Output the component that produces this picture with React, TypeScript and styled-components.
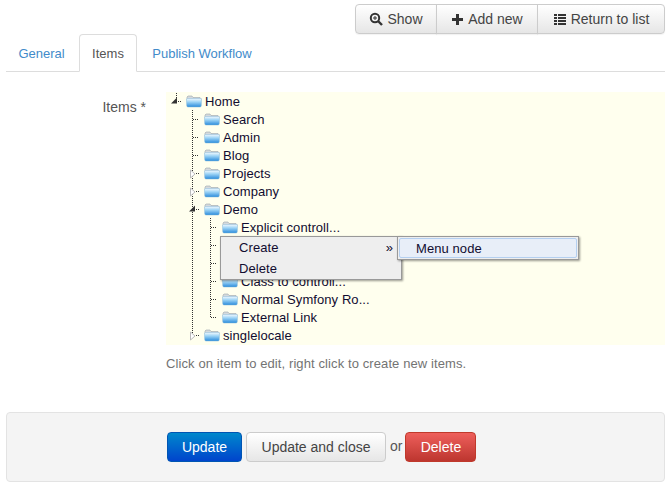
import { ReactNode } from "react";
import styled, { createGlobalStyle } from "styled-components";

const GlobalStyle = createGlobalStyle`
  html, body {
    margin: 0;
    padding: 0;
    background: #fff;
    font-family: "Liberation Sans", Arial, sans-serif;
    font-size: 14px;
    color: #555;
  }
  * { box-sizing: border-box; }
`;

const Page = styled.div`
  width: 671px;
  height: 488px;
  padding: 4px 6px 0;
  overflow: hidden;
`;

const Toolbar = styled.div`
  display: flex;
  justify-content: flex-end;
  height: 30px;
`;

const ToolButton = styled.button<{ $w: number }>`
  display: flex;
  align-items: center;
  justify-content: center;
  gap: 4px;
  width: ${({ $w }) => $w}px;
  height: 30px;
  margin-left: -1px;
  padding: 0;
  border: 1px solid #ccc;
  background: linear-gradient(#fff, #e6e6e6);
  box-shadow: 0 1px 1px rgba(0, 0, 0, 0.05);
  color: #444;
  font: inherit;

  &:first-child {
    border-radius: 4px 0 0 4px;
  }
  &:last-child {
    border-radius: 0 4px 4px 0;
  }
`;

const Tabs = styled.div`
  display: flex;
  height: 38px;
  border-bottom: 1px solid #ddd;
`;

const Tab = styled.div<{ $w: number; $active?: boolean }>`
  width: ${({ $w }) => $w}px;
  height: 38px;
  margin-right: 2px;
  line-height: 37px;
  font-size: 13px;
  text-align: center;
  border: 1px solid ${({ $active }) => ($active ? "#ddd" : "transparent")};
  border-bottom-color: ${({ $active }) => ($active ? "#fff" : "transparent")};
  border-radius: 4px 4px 0 0;
  background: ${({ $active }) => ($active ? "#fff" : "transparent")};
  color: ${({ $active }) => ($active ? "#555" : "#428bca")};
`;

const FormRow = styled.div`
  display: flex;
  margin-top: 20px;
`;

const FieldLabel = styled.label`
  width: 140px;
  padding-top: 7px;
  text-align: right;
  line-height: 16px;
`;

const Field = styled.div`
  margin-left: 20px;
  width: 499px;
`;

const TreeBox = styled.div`
  position: relative;
  height: 253px;
  background: #ffffee;
  color: #110c30;
  font-size: 13px;
  letter-spacing: 0.08px;
`;

const TreeList = styled.ul`
  list-style: none;
  margin: 0;
  padding: 0;
`;

const NestedList = styled(TreeList)`
  margin-left: 18px;
`;

/* dotted guide line runs down each node, cut short on the last child */
const TreeItem = styled.li<{ $last?: boolean; $root?: boolean }>`
  background-image: ${({ $root }) =>
    $root ? "none" : "repeating-linear-gradient(#333 0 1px, transparent 1px 2px)"};
  background-size: 1px ${({ $last }) => ($last ? "10px" : "100%")};
  background-position: 8px 0;
  background-repeat: no-repeat;
`;

const Row = styled.div`
  display: flex;
  align-items: flex-start;
  height: 18px;
`;

const Expander = styled.span`
  display: block;
  width: 18px;
  height: 18px;
  flex: none;
`;

const FolderWrap = styled.span`
  display: block;
  width: 21px;
  height: 18px;
  flex: none;
  padding-left: 2px;
`;

const NodeLabel = styled.span`
  white-space: nowrap;
  line-height: 20px;
`;

const ContextMenu = styled.div`
  position: absolute;
  left: 54px;
  top: 144px;
  width: 182px;
  height: 44px;
  background: #eee;
  border: 1px solid #999;
  box-shadow: 1px 1px 2px rgba(0, 0, 0, 0.4);
  font-size: 13px;
  z-index: 2;
`;

const MenuItem = styled.div`
  display: flex;
  justify-content: space-between;
  height: 21px;
  padding: 0 8px 0 18px;
  line-height: 22px;
`;

const SubMenu = styled.div`
  position: absolute;
  left: 176px;
  top: -1px;
  width: 182px;
  height: 24px;
  padding: 1px;
  background: #eee;
  border: 1px solid #999;
  box-shadow: 1px 1px 2px rgba(0, 0, 0, 0.4);
`;

const SubMenuItem = styled.div`
  height: 20px;
  padding-left: 16px;
  line-height: 20px;
  background: #e8eef8;
  border: 1px solid #b4cff0;
  border-radius: 2px;
`;

const Help = styled.p`
  margin: 11px 0 0;
  font-size: 13px;
  letter-spacing: 0.1px;
  line-height: 16px;
  color: #737373;
`;

const Footer = styled.div`
  display: flex;
  align-items: center;
  gap: 4px;
  height: 70px;
  margin-top: 40px;
  padding-left: 160px;
  background: #f4f4f4;
  border: 1px solid #e3e3e3;
  border-radius: 4px;
`;

const ActionButton = styled.button<{ $kind: "primary" | "default" | "danger"; $w: number }>`
  width: ${({ $w }) => $w}px;
  height: 30px;
  padding: 0;
  border-radius: 4px;
  font: inherit;
  border: 1px solid
    ${({ $kind }) =>
      $kind === "primary" ? "#0055b3" : $kind === "danger" ? "#c0392b" : "#ccc"};
  background: ${({ $kind }) =>
    $kind === "primary"
      ? "linear-gradient(#0088cc, #0044cc)"
      : $kind === "danger"
        ? "linear-gradient(#ee5f5b, #bd362f)"
        : "linear-gradient(#fff, #e6e6e6)"};
  color: ${({ $kind }) => ($kind === "default" ? "#444" : "#fff")};
`;

const OrText = styled.span`
  margin: 0 -1px 2px 0;
`;

function SearchIcon() {
  return (
    <svg width="14" height="14" viewBox="0 0 14 14">
      <circle cx="6" cy="6" r="4.2" fill="none" stroke="#333" strokeWidth="2" />
      <path d="M9 9l4 4" stroke="#333" strokeWidth="2.4" />
      <path d="M4 6h4M6 4v4" stroke="#333" strokeWidth="1" />
    </svg>
  );
}

function PlusIcon() {
  return (
    <svg width="13" height="13" viewBox="0 0 13 13">
      <path d="M5 1h3v4h4v3H8v4H5V8H1V5h4z" fill="#333" />
    </svg>
  );
}

function ListIcon() {
  return (
    <svg width="14" height="12" viewBox="0 0 14 12">
      <path
        d="M1 1h3v2H1zM5 1h8v2H5zM1 4h3v2H1zM5 4h8v2H5zM1 7h3v2H1zM5 7h8v2H5zM1 10h3v2H1zM5 10h8v2H5z"
        fill="#333"
      />
    </svg>
  );
}

function FolderIcon() {
  return (
    <svg width="16" height="18" viewBox="0 0 16 18">
      <defs>
        <linearGradient id="folderFill" x1="0" y1="0" x2="0" y2="1">
          <stop offset="0" stopColor="#f2f9fe" />
          <stop offset="0.4" stopColor="#9dd4f6" />
          <stop offset="1" stopColor="#2a8bdb" />
        </linearGradient>
      </defs>
      <path d="M1 7V5l1-1h4l1 1.5h7l1 1V8H1z" fill="#d5dadd" stroke="#9aa6ad" strokeWidth="0.6" />
      <path
        d="M.5 7.5q0-1 1-1h13q1 0 1 1l-.2 6q0 1.500-1.300 1.500H2q-1.300 0-1.300-1.500z"
        fill="url(#folderFill)"
        stroke="#86b8da"
        strokeWidth="0.5"
      />
    </svg>
  );
}

/* expander glyphs with the dotted stub that joins the folder */
function ExpanderIcon({ state, root }: { state: "open" | "closed" | "leaf"; root?: boolean }) {
  return (
    <svg width="18" height="18" viewBox="0 0 18 18">
      {state === "leaf" ? (
        <path d="M9 9.5h6" stroke="#333" strokeDasharray="1 1" />
      ) : (
        <path d="M12 9.5h3" stroke="#333" strokeDasharray="1 1" />
      )}
      {state === "open" && <path d="M5 11.500h6V5.500z" fill="#333" />}
      {state === "open" && root && <path d="M10.500 1v5" stroke="#333" strokeDasharray="1 1" />}
      {state === "closed" && <path d="M6.500 6v8l4.500-4z" fill="#fff" stroke="#bbb" />}
    </svg>
  );
}

type NodeProps = {
  label?: string;
  state?: "open" | "closed" | "leaf";
  last?: boolean;
  root?: boolean;
  children?: ReactNode;
};

function Node({ label, state = "leaf", last, root, children }: NodeProps) {
  return (
    <TreeItem $last={last} $root={root}>
      <Row>
        <Expander>
          <ExpanderIcon state={state} root={root} />
        </Expander>
        <FolderWrap>
          <FolderIcon />
        </FolderWrap>
        {label && <NodeLabel>{label}</NodeLabel>}
      </Row>
      {children && <NestedList>{children}</NestedList>}
    </TreeItem>
  );
}

export default function App() {
  return (
    <Page>
      <GlobalStyle />
      <Toolbar>
        <ToolButton $w={82}>
          <SearchIcon />
          Show
        </ToolButton>
        <ToolButton $w={102}>
          <PlusIcon />
          Add new
        </ToolButton>
        <ToolButton $w={128}>
          <ListIcon />
          Return to list
        </ToolButton>
      </Toolbar>
      <Tabs>
        <Tab $w={71}>General</Tab>
        <Tab $w={58} $active>
          Items
        </Tab>
        <Tab $w={126}>Publish Workflow</Tab>
      </Tabs>
      <FormRow>
        <FieldLabel>Items *</FieldLabel>
        <Field>
          <TreeBox>
            <TreeList>
              <Node label="Home" state="open" root last>
                <Node label="Search" />
                <Node label="Admin" />
                <Node label="Blog" />
                <Node label="Projects" state="closed" />
                <Node label="Company" state="closed" />
                <Node label="Demo" state="open">
                  <Node label="Explicit controll..." />
                  {/* these two rows sit fully behind the context menu */}
                  <Node />
                  <Node />
                  <Node label="Class to controll..." />
                  <Node label="Normal Symfony Ro..." />
                  <Node label="External Link" last />
                </Node>
                <Node label="singlelocale" state="closed" last />
              </Node>
            </TreeList>
            <ContextMenu>
              <MenuItem>
                Create <span>»</span>
              </MenuItem>
              <MenuItem>Delete</MenuItem>
              <SubMenu>
                <SubMenuItem>Menu node</SubMenuItem>
              </SubMenu>
            </ContextMenu>
          </TreeBox>
          <Help>Click on item to edit, right click to create new items.</Help>
        </Field>
      </FormRow>
      <Footer>
        <ActionButton $kind="primary" $w={75}>
          Update
        </ActionButton>
        <ActionButton $kind="default" $w={140}>
          Update and close
        </ActionButton>
        <OrText>or</OrText>
        <ActionButton $kind="danger" $w={71}>
          Delete
        </ActionButton>
      </Footer>
    </Page>
  );
}
